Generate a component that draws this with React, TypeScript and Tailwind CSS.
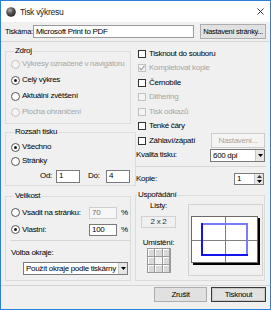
import React from "react";

const font = "font-['Liberation_Sans',Arial,sans-serif]";

function Radio({ label, checked = false, disabled = false }: { label: string; checked?: boolean; disabled?: boolean }) {
  return (
    <div className="flex h-full items-center">
      <span
        className={`flex h-[9px] w-[9px] shrink-0 items-center justify-center rounded-full border ${
          disabled ? "border-[#c2c2c2] bg-[#f4f4f4]" : "border-[#555] bg-white"
        }`}
      >
        {checked && <span className="h-[3px] w-[3px] rounded-full bg-[#1a1a1a]" />}
      </span>
      <span className={`ml-[2px] whitespace-nowrap ${disabled ? "text-[#a6a6a6]" : "text-black"}`}>{label}</span>
    </div>
  );
}

function Check({ label, checked = false, disabled = false }: { label: string; checked?: boolean; disabled?: boolean }) {
  return (
    <div className="flex items-center">
      <span
        className={`flex h-[8px] w-[8px] shrink-0 items-center justify-center border ${
          disabled ? "border-[#c2c2c2] bg-[#f4f4f4]" : "border-[#333] bg-white"
        }`}
      >
        {checked && (
          <svg width="6" height="6" viewBox="0 0 6 6">
            <polyline points="0.5,3 2.2,4.8 5.5,0.8" fill="none" stroke="#a8a8a8" strokeWidth="1.2" />
          </svg>
        )}
      </span>
      <span className={`ml-[3px] whitespace-nowrap ${disabled ? "text-[#a6a6a6]" : "text-black"}`}>{label}</span>
    </div>
  );
}

function Field({ value, w, disabled = false }: { value: string; w: string; disabled?: boolean }) {
  return (
    <div
      className={`flex h-[12px] ${w} items-center border px-[2px] ${
        disabled ? "border-[#cfcfcf] bg-[#f7f7f7] text-[#6d6d6d]" : "border-[#7a7a7a] bg-white text-black"
      }`}
    >
      {value}
    </div>
  );
}

function Arrow() {
  return (
    <svg width="5" height="3" viewBox="0 0 5 3">
      <polygon points="0,0 5,0 2.5,3" fill="#000" />
    </svg>
  );
}

function Select({ value, w }: { value: string; w: string }) {
  return (
    <div className={`flex h-[13px] ${w} items-stretch border border-[#7a7a7a] bg-white`}>
      <span className="flex-1 overflow-hidden whitespace-nowrap pl-[2px] leading-[11px]">{value}</span>
      <span className="flex w-[9px] items-center justify-center border-l border-[#c8c8c8] bg-[#e6e6e6]">
        <Arrow />
      </span>
    </div>
  );
}

function Legend({ children, className = "" }: { children: React.ReactNode; className?: string }) {
  return <legend className={`h-[10px] px-[1px] leading-[10px] text-black ${className}`}>{children}</legend>;
}

function Preview() {
  return (
    <svg width="69" height="49" viewBox="0 0 69 49">
      <rect x="2" y="2" width="67" height="47" fill="#000" />
      <rect x="0.5" y="0.5" width="66" height="46" fill="#fff" stroke="#6a6a6a" />
      <line x1="34.5" y1="1" x2="34.5" y2="46" stroke="#808080" />
      <line x1="1" y1="24.5" x2="66" y2="24.5" stroke="#808080" />
      <line x1="11" y1="8" x2="57" y2="8" stroke="#7b7bff" strokeWidth="2" />
      <line x1="56" y1="7" x2="56" y2="39" stroke="#7b7bff" strokeWidth="2" />
      <line x1="11" y1="7" x2="11" y2="40" stroke="#1414f0" strokeWidth="2" />
      <line x1="10" y1="39" x2="57" y2="39" stroke="#1414f0" strokeWidth="2" />
    </svg>
  );
}

const cells = [0, 1, 2, 3, 4, 5, 6, 7, 8];

export default function App() {
  return (
    <div className={`${font} flex h-[310px] w-[271px] flex-col overflow-hidden border border-[#2b7fd6] bg-[#f0f0f0] text-[8px] leading-[10px] tracking-[-0.3px] text-black`}>
      {/* title bar */}
      <div className="flex h-[21px] shrink-0 items-center bg-white pl-[5px] pr-[6px]">
        <svg width="10" height="10" viewBox="0 0 10 10">
          <defs>
            <radialGradient id="ball" cx="0.38" cy="0.32" r="0.7">
              <stop offset="0" stopColor="#b5b5b5" />
              <stop offset="0.45" stopColor="#5c5c5c" />
              <stop offset="1" stopColor="#262626" />
            </radialGradient>
          </defs>
          <circle cx="5" cy="5" r="4.8" fill="url(#ball)" />
        </svg>
        <span className="ml-[4px] text-[8.5px] text-[#222]">Tisk výkresu</span>
        <svg className="ml-auto" width="7" height="7" viewBox="0 0 7 7">
          <path d="M0.5 0.5 L6.5 6.5 M6.5 0.5 L0.5 6.5" stroke="#222" strokeWidth="0.9" />
        </svg>
      </div>

      {/* printer row */}
      <div className="flex h-[19px] shrink-0 items-center pl-[4px] pr-[4px]">
        <span className="w-[28px] whitespace-nowrap text-[7.5px]">Tiskárna:</span>
        <div className="flex h-[13px] w-[161px] items-center border border-[#9a9a9a] bg-white px-[2px]">
          Microsoft Print to PDF
        </div>
        <button className="ml-auto h-[15px] w-[66px] whitespace-nowrap border border-[#adadad] bg-[#e1e1e1] text-[7.5px] leading-[13px]">
          Nastavení stránky...
        </button>
      </div>
      <div className="h-px shrink-0 bg-[#d6d6d6]" />

      {/* columns */}
      <div className="flex shrink-0 gap-[4px] pl-[4px] pr-[4px]">
        <div className="flex w-[126px] flex-col">
          <fieldset className="mt-[4px] border border-[#dcdcdc] px-[5px] pb-[3px]">
            <Legend className="ml-[3px]">Zdroj</Legend>
            <div className="h-[16px]"><Radio label="Výkresy označené v navigátoru" disabled /></div>
            <div className="h-[16px]"><Radio label="Celý výkres" checked /></div>
            <div className="h-[16px]"><Radio label="Aktuální zvětšení" /></div>
            <div className="h-[16px]"><Radio label="Plocha ohraničení" disabled /></div>
          </fieldset>

          <fieldset className="mt-[3px] border border-[#dcdcdc] px-[5px] pb-[2px]">
            <Legend className="ml-[3px]">Rozsah tisku</Legend>
            <div className="mt-[3px] h-[14px]"><Radio label="Všechno" checked /></div>
            <div className="h-[14px]"><Radio label="Stránky" /></div>
            <div className="mt-[1px] flex h-[14px] items-center pl-[29px]">
              <span className="w-[16px]">Od:</span>
              <div className="flex h-[13px] w-[24px] items-center border border-[#7a7a7a] bg-white px-[2px]">1</div>
              <span className="ml-[8px] w-[18px]">Do:</span>
              <div className="flex h-[13px] w-[24px] items-center border border-[#7a7a7a] bg-white px-[2px]">4</div>
            </div>
          </fieldset>

          <fieldset className="mt-[5px] border border-[#dcdcdc] pb-[5px] pl-[5px]">
            <Legend className="ml-[3px]">Velikost</Legend>
            <div className="mt-[4px] flex h-[15px] items-center">
              <div className="w-[78px]"><Radio label="Vsadit na stránku:" /></div>
              <Field value="70" w="w-[28px]" disabled />
              <span className="ml-[4px]">%</span>
            </div>
            <div className="mt-[2px] flex h-[15px] items-center">
              <div className="w-[78px]"><Radio label="Vlastní:" checked /></div>
              <Field value="100" w="w-[28px]" />
              <span className="ml-[4px]">%</span>
            </div>
            <div className="mt-[3px] h-px bg-[#d6d6d6]" />
            <div className="mt-[5px] flex h-[14px] items-center">Volba okraje:</div>
            <div className="ml-[12px] mt-[2px]">
              <Select value="Použít okraje podle tiskárny" w="w-[105px]" />
            </div>
          </fieldset>
        </div>

        <div className="flex w-[131px] flex-col">
          <div className="mt-[4px] flex h-[15px] items-center pl-[3px]"><Check label="Tisknout do souboru" /></div>
          <div className="flex h-[14px] items-center pl-[3px]"><Check label="Kompletovat kopie" checked disabled /></div>
          <div className="flex h-[15px] items-center pl-[3px]"><Check label="Černobíle" /></div>
          <div className="flex h-[14px] items-center pl-[3px]"><Check label="Dithering" disabled /></div>
          <div className="flex h-[15px] items-center pl-[3px]"><Check label="Tisk odkazů" disabled /></div>
          <div className="flex h-[14px] items-center pl-[3px]"><Check label="Tenké čáry" /></div>
          <div className="flex h-[15px] items-center pl-[3px] pr-[1px]">
            <Check label="Záhlaví/zápatí" />
            <button className="ml-auto h-[15px] w-[54px] border border-[#cccccc] bg-[#f4f4f4] leading-[13px] text-[#a6a6a6]">
              Nastavení...
            </button>
          </div>
          <div className="flex h-[14px] items-center pl-[1px] pr-[1px]">
            <span>Kvalita tisku:</span>
            <div className="ml-auto">
              <Select value="600 dpi" w="w-[55px]" />
            </div>
          </div>
          <div className="mt-[4px] h-px bg-[#d6d6d6]" />
          <div className="mt-[5px] flex h-[14px] items-center pl-[1px] pr-[2px]">
            <span>Kopie:</span>
            <div className="ml-auto flex h-[12px] items-stretch border border-[#7a7a7a] bg-white">
              <span className="w-[19px] pl-[2px] leading-[10px]">1</span>
              <span className="flex w-[9px] flex-col border-l border-[#c8c8c8] bg-[#e6e6e6]">
                <span className="flex flex-1 items-center justify-center">
                  <svg width="5" height="3" viewBox="0 0 5 3"><polygon points="0,3 5,3 2.5,0" fill="#333" /></svg>
                </span>
                <span className="flex flex-1 items-center justify-center">
                  <Arrow />
                </span>
              </span>
            </div>
          </div>

          <fieldset className="mr-[1px] mt-[4px] border border-[#dcdcdc] pb-[4px]">
            <Legend className="ml-[1px]">Uspořádání</Legend>
            <div className="flex items-start">
              <div className="flex w-[45px] flex-col items-center">
                <div className="mt-[1px] h-[10px]">Listy:</div>
                <div className="mt-[5px] flex h-[12px] w-[35px] items-center justify-center border border-[#d2d2d2] bg-[#f0f0f0] text-[#333]">
                  2 x 2
                </div>
                <div className="mt-[10px] h-[10px]">Umístění:</div>
                <div className="grid h-[25px] w-[24px] grid-cols-3 gap-px border border-[#9a9a9a] bg-[#9a9a9a]">
                  {cells.map((c) => (
                    <span
                      key={c}
                      className={c === 4 ? "bg-[#f2f2f2]" : "border-l border-t border-white bg-[#d9d9d9]"}
                    />
                  ))}
                </div>
              </div>
              <div className="ml-[7px] mt-[4px] flex h-[72px] w-[75px] items-center justify-center border border-[#d2d2d2] pt-[1px]">
                <Preview />
              </div>
            </div>
          </fieldset>
        </div>
      </div>

      {/* footer */}
      <div className="mt-[4px] h-px shrink-0 bg-[#d6d6d6]" />
      <div className="mt-[1px] flex h-[15px] shrink-0 justify-end gap-[4px] pr-[4px]">
        <button className="h-[15px] w-[53px] border border-[#adadad] bg-[#e1e1e1] leading-[13px]">Zrušit</button>
        <button className="h-[15px] w-[55px] border border-[#3a3a3a] bg-[#e1e1e1] leading-[13px] shadow-[inset_0_0_0_1px_#c8c8c8]">
          Tisknout
        </button>
      </div>
    </div>
  );
}
